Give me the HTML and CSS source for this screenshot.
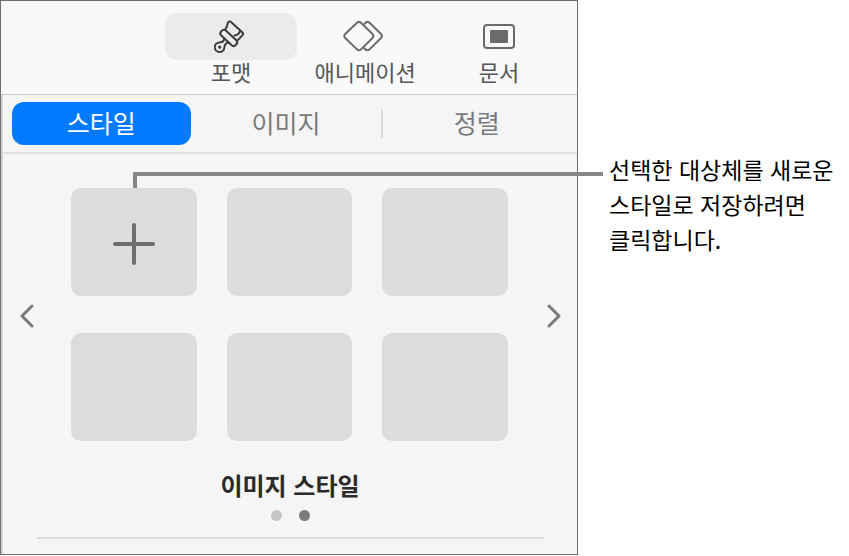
FILE: index.html
```html
<!DOCTYPE html>
<html lang="ko">
<head>
    <meta charset="UTF-8">
    <meta name="viewport" content="width=device-width, initial-scale=1.0">
    <link rel="stylesheet" href="styles.css">
    <title>이미지 스타일</title>
</head>
<body>

<div class="figure">
    <div class="panel">

        <div class="toolbar">
            <button type="button" class="tool active">
                <span class="tool-icon">
                    <svg width="34" height="36" viewBox="0 0 34 36">
                        <path d="M11 11 C13 8.5 13.5 6 14 3.5 Q15 1.5 17 3 L28.5 13.5 Q29.8 15 28.2 16.6 C26 19 25 19.5 23 22"/>
                        <path d="M26 12 C25.5 14.5 23.5 16 20.5 16.5"/>
                        <path d="M11.5 11.3 Q9.5 9.8 7.2 12.3 Q5.3 14.5 7 16.2 L18 26.5 Q19.8 28 21.8 26 Q24.3 23.3 22.6 21.6 Z"/>
                        <path d="M10.3 19.3 C10.3 22.5 8.5 23.2 5.6 23.4 A4.8 4.8 0 1 0 10.4 28.4 C10.8 25.4 12 23.8 14.8 23.6"/>
                        <circle class="hole" cx="5.7" cy="28.2" r="1.6"/>
                    </svg>
                </span>
                <span>포맷</span>
            </button>
            <button type="button" class="tool">
                <span class="tool-icon">
                    <svg width="46" height="34" viewBox="0 0 46 34">
                        <path d="M15 2.8 Q17 1 19 2.8 L30.5 14 Q32.3 16 30.5 18 L19 29.4 Q17 31 15 29.4 L3.2 18 Q1.4 16 3.2 14 Z"/>
                        <path d="M22 4.2 L23.5 2.8 Q25.5 1 27.5 2.8 L39 14 Q40.8 16 39 18 L27.5 29.4 Q25.5 31 23.5 29.4 L22 28"/>
                    </svg>
                </span>
                <span>애니메이션</span>
            </button>
            <button type="button" class="tool">
                <span class="tool-icon">
                    <svg width="34" height="28" viewBox="0 0 34 28">
                        <rect x="2" y="2" width="30" height="23" rx="3"/>
                        <rect class="solid" x="8" y="7" width="18" height="13" rx="1"/>
                    </svg>
                </span>
                <span>문서</span>
            </button>
        </div>

        <div class="content">
            <div class="tabs">
                <button type="button" class="tab active">스타일</button>
                <button type="button" class="tab">이미지</button>
                <button type="button" class="tab divided">정렬</button>
            </div>

            <div class="gallery">
                <button type="button" class="arrow" aria-label="이전">
                    <svg width="16" height="26" viewBox="0 0 16 26"><path d="M13 3 L3 13 L13 23"/></svg>
                </button>
                <div class="styles">
                    <button type="button" class="style" aria-label="스타일 추가">
                        <svg width="42" height="42" viewBox="0 0 42 42"><path d="M21 2 V40 M2 21 H40"/></svg>
                    </button>
                    <button type="button" class="style" aria-label="스타일 1"></button>
                    <button type="button" class="style" aria-label="스타일 2"></button>
                    <button type="button" class="style" aria-label="스타일 3"></button>
                    <button type="button" class="style" aria-label="스타일 4"></button>
                    <button type="button" class="style" aria-label="스타일 5"></button>
                </div>
                <button type="button" class="arrow next" aria-label="다음">
                    <svg width="16" height="26" viewBox="0 0 16 26"><path d="M3 3 L13 13 L3 23"/></svg>
                </button>
            </div>

            <h2>이미지 스타일</h2>
            <div class="dots">
                <span class="dot"></span>
                <span class="dot current"></span>
            </div>
            <hr>
        </div>

        <!--Line from the add button to the text on the right-->
        <div class="leader"></div>
    </div>

    <p class="callout">선택한 대상체를 새로운 스타일로 저장하려면 클릭합니다.</p>
</div>

</body>
</html>
```
FILE: styles.css
```css
*{
    box-sizing: border-box;
}
body{
    margin: 0;
    background-color: white;
    font-family: "Noto Sans CJK KR", sans-serif;
}
button{
    border: none;
    padding: 0;
    background: none;
    font-family: inherit;
}
svg{
    display: block;
    fill: none;
    stroke: #6b6b6b;
    stroke-width: 2;
    stroke-linecap: round;
    stroke-linejoin: round;
}
.figure{
    display: grid;
    grid-template-columns: 32fr 15fr;
    align-items: start;
}
.panel{
    position: relative;
    border: 1px solid #6e6e6e;
    background-color: #f5f5f5;
}
.toolbar{
    display: flex;
    justify-content: flex-end;
    gap: 2px;
    padding: 12px 12px 12px 0;
    border-bottom: 1px solid #cccccc;
    background-color: #f9f9f9;
}
.tool{
    width: 132px;
    color: #555555;
    font-size: 22px;
    line-height: 22px;
}
.tool-icon{
    display: flex;
    align-items: center;
    justify-content: center;
    height: 47px;
    border-radius: 12px;
}
.tool.active .tool-icon{
    background-color: #ebebeb;
}
.tool.active svg{
    stroke: #3c3c3c;
}
.solid{
    fill: #6b6b6b;
    stroke: none;
}
.hole{
    fill: #3c3c3c;
    stroke: none;
}
.content{
    padding-bottom: 15px;
    border-left: 2px solid #d2d2d2;
}
.tabs{
    display: grid;
    grid-template-columns: 15fr 16fr 16fr;
    padding: 7px 5px 7px 9px;
    border-bottom: 2px solid #e0e0e0;
}
.tab{
    position: relative;
    height: 43px;
    padding-bottom: 2px;
    color: #7a7a7a;
    font-size: 25px;
    line-height: 41px;
}
.tab.active{
    border-radius: 12px;
    background-color: #007aff;
    color: white;
}
.tab.divided::before{
    content: "";
    position: absolute;
    left: 0;
    top: 7px;
    bottom: 7px;
    width: 2px;
    background-color: #dcdcdc;
}
.gallery{
    display: grid;
    grid-template-columns: 68px 1fr 69px;
    padding: 34px 0 26px;
}
.arrow{
    display: flex;
    align-items: center;
    padding: 2px 15px 0 16px;
}
.arrow.next{
    justify-content: flex-end;
}
.arrow svg{
    stroke: #7a7a7a;
    stroke-width: 3;
}
.styles{
    display: grid;
    grid-template-columns: repeat(3, 1fr);
    gap: 37px 30px;
}
.style{
    display: flex;
    align-items: center;
    justify-content: center;
    height: 108px;
    padding-top: 4px;
    border-radius: 10px;
    background-color: #dcdcdc;
}
.style svg{
    stroke: #6e6e6e;
    stroke-width: 4;
}
h2{
    margin: 0;
    color: #2a2a2a;
    font-size: 24px;
    line-height: 36px;
    text-align: center;
}
.dots{
    display: flex;
    justify-content: center;
    gap: 17px;
    padding: 7px 0 16px;
}
.dot{
    width: 11px;
    height: 11px;
    border-radius: 50%;
    background-color: #c6c6c6;
}
.dot.current{
    background-color: #7c7c7c;
}
hr{
    margin: 0 33px 0 34px;
    border: none;
    border-top: 2px solid #dcdcdc;
}
.leader{
    position: absolute;
    left: 23%;
    right: -26px;
    top: 171px;
    height: 16px;
    border-top: 4px solid #868686;
    border-left: 4px solid #868686;
}
.callout{
    margin: 0;
    padding: 152px 0 0 31px;
    font-size: 23px;
    line-height: 35px;
    word-break: keep-all;
}
```
